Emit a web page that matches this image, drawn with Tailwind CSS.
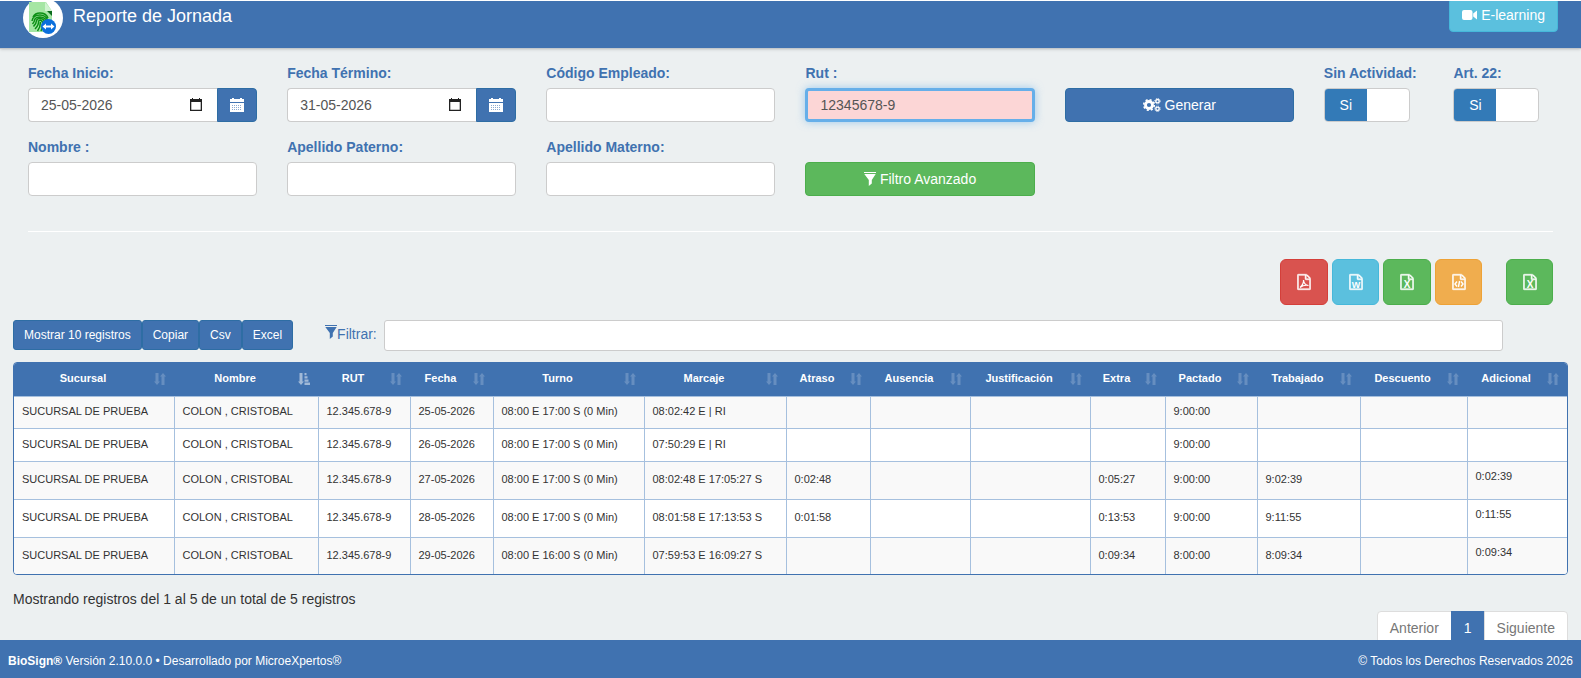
<!DOCTYPE html>
<html lang="es">
<head>
    <meta charset="UTF-8">
    <meta name="viewport" content="width=device-width, initial-scale=1.0">
    <title>Reporte de Jornada</title>
    <script src="https://cdn.jsdelivr.net/npm/@tailwindcss/browser@4"></script>
</head>
<body class="min-h-screen bg-[#ecf0f1] font-['Liberation_Sans',Arial,sans-serif] text-sm text-[#333]">

    <!-- Shared icons -->
    <svg class="hidden">
        <symbol id="i-calendar" viewBox="0 0 14 14">
            <path fill="currentColor" d="M0 1h2V0h2v1h6V0h2v1h2v3H0z"/>
            <path fill="currentColor" d="M0 5h14v9H0z"/>
            <path stroke="#4072b0" stroke-opacity=".6" stroke-dasharray="1 1" d="M2 7.500h10M2 9.500h10M2 11.500h10"/>
        </symbol>
        <symbol id="i-picker" viewBox="0 0 12 13">
            <path fill="#222" fill-rule="evenodd" d="M0 1h2V0h1v1h6V0h1v1h2v12H0zM1.300 4v7.700h9.400V4z"/>
        </symbol>
        <symbol id="i-filter" viewBox="0 0 12 14">
            <path fill="currentColor" d="M0 0h12v1H0zM0.300 2h11.400L7.800 8v3.500L4.800 14V8z"/>
        </symbol>
        <symbol id="i-file" viewBox="-40 0 1616 1792">
            <path fill="currentColor" stroke="currentColor" stroke-width="60" d="M1468 380q28 28 48 76t20 88v1152q0 40-28 68t-68 28H96q-40 0-68-28t-28-68V96q0-40 28-68T96 0h896q40 0 88 20t76 48zm-444-244v376h376q-10-29-22-41l-313-313q-12-12-41-22zm384 1528V640H992q-40 0-68-28t-28-68V128H128v1536h1280z"/>
        </symbol>
        <symbol id="i-sort" viewBox="0 0 12 12">
            <path fill="currentColor" d="M1.500 0h3v8.500H6l-3 3.500-3-3.500h1.500zM7.500 12h3V3.500H12L9 0 6 3.500h1.500z"/>
        </symbol>
        <symbol id="i-sort-asc" viewBox="0 0 12 12">
            <path fill="currentColor" d="M1.500 0h3v8.500H6l-3 3.500-3-3.500h1.500zM6.500 0h2v2.300h-2zM6.500 3.200h3v2.300h-3zM6.500 6.400h4v2.300h-4zM6.500 9.600H12V12H6.500z"/>
        </symbol>
    </svg>

    <header class="flex h-[49px] items-start overflow-hidden border-t border-b border-t-white border-b-[#c4c8cc] bg-[#4072b0] pr-[23px] pl-[23px] shadow-sm">
        <svg class="-mt-[3px] size-10 shrink-0" viewBox="0 0 40 40">
            <circle cx="20" cy="20" r="20" fill="#fff"/>
            <path fill="#a5e6a4" d="M6 4h17l6 9v21H6z"/>
            <path fill="#cff3cf" d="M22 4l7 9h-7z"/>
            <path fill="#0b6b1c" d="M24 13h5v5z"/>
            <g fill="none" stroke="#0b8f14" stroke-width="1.500">
                <path d="M10 19q2-4 7-4 6 0 8 5M9 23q1-6 8-6 6 0 8 6M9.500 26q2-2 2-4 1-3 5.500-3 6 0 7 6v3M10.500 28.500q3-3 3-6 .500-2 3.500-2 5 0 5 6 0 3-1 5M12 31q4-4 3.500-8 3-2 4.500 2 0 4-2 8M14.500 33q3-4 3-9"/>
            </g>
            <circle cx="25.500" cy="28.500" r="7.500" fill="#0b6fdc"/>
            <path fill="#fff" d="M19.500 28.500l3.500-3v2h5v-2l3.500 3-3.500 3v-2h-5v2z"/>
        </svg>
        <h1 class="mt-[4px] ml-[10px] text-lg leading-[22px] text-white">Reporte de Jornada</h1>
        <button type="button" class="-mt-[3px] ml-auto flex h-[34px] items-center gap-1 rounded border border-[#46b8da] bg-[#5bc0de] px-3 text-white">
            <svg class="h-[14px] w-[15px]" viewBox="0 0 15 14"><path fill="currentColor" d="M2 2h6.500q2 0 2 2v6q0 2-2 2H2q-2 0-2-2V4q0-2 2-2zM15 2.500v9L11.200 8.500v-3z"/></svg>
            E-learning
        </button>
    </header>

    <main class="px-[13px] pt-[14px] pb-[33px]">
        <form onsubmit="return false">
            <div class="grid grid-cols-12 gap-y-[15px]">
                <div class="col-span-2 px-[15px]">
                    <label for="fecha_inicio" class="mb-[5px] block font-bold text-[#4072b0]">Fecha Inicio:</label>
                    <div class="flex">
                        <div class="relative min-w-0 flex-1">
                            <input id="fecha_inicio" type="text" value="25-05-2026" class="h-[34px] w-full rounded-l border border-r-0 border-[#ccc] bg-white px-3 text-[#555]">
                            <svg class="absolute top-[10px] right-[15px] h-[13px] w-3"><use href="#i-picker"/></svg>
                        </div>
                        <button type="button" aria-label="Calendario inicio" class="flex h-[34px] w-10 items-center justify-center rounded-r border border-[#2e6da4] bg-[#4072b0] text-white"><svg class="size-[14px]"><use href="#i-calendar"/></svg></button>
                    </div>
                </div>
                <div class="col-span-2 px-[15px]">
                    <label for="fecha_termino" class="mb-[5px] block font-bold text-[#4072b0]">Fecha Término:</label>
                    <div class="flex">
                        <div class="relative min-w-0 flex-1">
                            <input id="fecha_termino" type="text" value="31-05-2026" class="h-[34px] w-full rounded-l border border-r-0 border-[#ccc] bg-white px-3 text-[#555]">
                            <svg class="absolute top-[10px] right-[15px] h-[13px] w-3"><use href="#i-picker"/></svg>
                        </div>
                        <button type="button" aria-label="Calendario término" class="flex h-[34px] w-10 items-center justify-center rounded-r border border-[#2e6da4] bg-[#4072b0] text-white"><svg class="size-[14px]"><use href="#i-calendar"/></svg></button>
                    </div>
                </div>
                <div class="col-span-2 px-[15px]">
                    <label for="codigo" class="mb-[5px] block font-bold text-[#4072b0]">Código Empleado:</label>
                    <input id="codigo" type="text" class="h-[34px] w-full rounded border border-[#ccc] bg-white px-3 text-[#555]">
                </div>
                <div class="col-span-2 px-[15px]">
                    <label for="rut" class="mb-[5px] block font-bold text-[#4072b0]">Rut :</label>
                    <input id="rut" type="text" value="12345678-9" class="h-[34px] w-full rounded border-3 border-[#66afe9] bg-[#fcd6d6] px-3 text-[#555] shadow-[0_0_8px_#66afe999] outline-none">
                </div>
                <div class="col-span-2 flex items-end px-[15px]">
                    <button type="submit" class="flex h-[34px] w-full items-center justify-center gap-1 rounded border border-[#2e6da4] bg-[#4072b0] text-white">
                        <svg class="h-[14px] w-[18px]" viewBox="0 0 18 14" fill="none" stroke="currentColor">
                            <circle cx="6" cy="7" r="3.500" stroke-width="2.800"/>
                            <circle cx="6" cy="7" r="5.300" stroke-width="1.600" stroke-dasharray="2.080"/>
                            <circle cx="14.500" cy="3.200" r="1.700" stroke-width="1.400"/>
                            <circle cx="14.500" cy="3.200" r="2.700" stroke-width="1" stroke-dasharray="1.060"/>
                            <circle cx="14.500" cy="10.800" r="1.700" stroke-width="1.400"/>
                            <circle cx="14.500" cy="10.800" r="2.700" stroke-width="1" stroke-dasharray="1.060"/>
                        </svg>
                        Generar
                    </button>
                </div>
                <div class="col-span-1 pl-[15px]">
                    <label for="sin_actividad" class="mb-[5px] block font-bold whitespace-nowrap text-[#4072b0]">Sin Actividad:</label>
                    <label class="flex h-[34px] w-[86px] overflow-hidden rounded border border-[#ccc] bg-white">
                        <input id="sin_actividad" type="checkbox" checked class="sr-only">
                        <span class="flex w-1/2 items-center justify-center bg-[#337ab7] text-white">Si</span>
                    </label>
                </div>
                <div class="col-span-1 pl-[15px]">
                    <label for="art22" class="mb-[5px] block font-bold whitespace-nowrap text-[#4072b0]">Art. 22:</label>
                    <label class="flex h-[34px] w-[86px] overflow-hidden rounded border border-[#ccc] bg-white">
                        <input id="art22" type="checkbox" checked class="sr-only">
                        <span class="flex w-1/2 items-center justify-center bg-[#337ab7] text-white">Si</span>
                    </label>
                </div>

                <div class="col-span-2 px-[15px]">
                    <label for="nombre" class="mb-[5px] block font-bold text-[#4072b0]">Nombre :</label>
                    <input id="nombre" type="text" class="h-[34px] w-full rounded border border-[#ccc] bg-white px-3 text-[#555]">
                </div>
                <div class="col-span-2 px-[15px]">
                    <label for="paterno" class="mb-[5px] block font-bold text-[#4072b0]">Apellido Paterno:</label>
                    <input id="paterno" type="text" class="h-[34px] w-full rounded border border-[#ccc] bg-white px-3 text-[#555]">
                </div>
                <div class="col-span-2 px-[15px]">
                    <label for="materno" class="mb-[5px] block font-bold text-[#4072b0]">Apellido Materno:</label>
                    <input id="materno" type="text" class="h-[34px] w-full rounded border border-[#ccc] bg-white px-3 text-[#555]">
                </div>
                <div class="col-span-2 flex items-end px-[15px]">
                    <button type="button" class="flex h-[34px] w-full items-center justify-center gap-1 rounded border border-[#4cae4c] bg-[#5cb85c] text-white">
                        <svg class="h-[14px] w-3"><use href="#i-filter"/></svg>
                        Filtro Avanzado
                    </button>
                </div>
            </div>
        </form>

        <hr class="mx-[15px] mt-[35px] border-white">

        <!-- Export buttons -->
        <div class="mt-[27px] mr-[15px] flex justify-end gap-1 text-white">
            <button type="button" aria-label="PDF" class="flex h-[46px] w-12 items-center justify-center rounded-md border border-[#d43f3a] bg-[#d9534f]">
                <svg class="h-[18px] w-[14px]" viewBox="0 0 14 18"><use href="#i-file" width="14" height="18"/><path fill="none" stroke="currentColor" stroke-width="1.200" d="M3 14.500Q7 11 6.500 7q.500 5 5 5.500Q7 11.500 3 14.500"/></svg>
            </button>
            <button type="button" aria-label="Word" class="flex h-[46px] w-[47px] items-center justify-center rounded-md border border-[#46b8da] bg-[#5bc0de]">
                <svg class="h-[18px] w-[14px]" viewBox="0 0 14 18"><use href="#i-file" width="14" height="18"/><text x="7" y="14.500" text-anchor="middle" font-size="9" font-weight="bold" fill="currentColor">W</text></svg>
            </button>
            <button type="button" aria-label="Excel" class="flex h-[46px] w-12 items-center justify-center rounded-md border border-[#4cae4c] bg-[#5cb85c]">
                <svg class="h-[18px] w-[14px]" viewBox="0 0 14 18"><use href="#i-file" width="14" height="18"/><text x="7" y="15" text-anchor="middle" font-size="10" font-weight="bold" fill="currentColor">X</text></svg>
            </button>
            <button type="button" aria-label="XML" class="flex h-[46px] w-[47px] items-center justify-center rounded-md border border-[#eea236] bg-[#f0ad4e]">
                <svg class="h-[18px] w-[14px]" viewBox="0 0 14 18"><use href="#i-file" width="14" height="18"/><path fill="none" stroke="currentColor" stroke-width="1.400" d="M5 8.500L3 11l2 2.500M9 8.500l2 2.500-2 2.500M7.600 8l-1.200 6"/></svg>
            </button>
            <button type="button" aria-label="Excel resumen" class="ml-5 flex h-[46px] w-[47px] items-center justify-center rounded-md border border-[#4cae4c] bg-[#5cb85c]">
                <svg class="h-[18px] w-[14px]" viewBox="0 0 14 18"><use href="#i-file" width="14" height="18"/><text x="7" y="15" text-anchor="middle" font-size="10" font-weight="bold" fill="currentColor">X</text></svg>
            </button>
        </div>

        <div class="mt-[15px] mr-[65px] flex items-start">
            <div class="flex text-xs text-white">
                <button type="button" class="h-[30px] rounded-[3px] border border-[#2e6da4] bg-[#4072b0] px-[10px]">Mostrar 10 registros</button>
                <button type="button" class="h-[30px] rounded-[3px] border border-[#2e6da4] bg-[#4072b0] px-[10px]">Copiar</button>
                <button type="button" class="h-[30px] rounded-[3px] border border-[#2e6da4] bg-[#4072b0] px-[10px]">Csv</button>
                <button type="button" class="h-[30px] rounded-[3px] border border-[#2e6da4] bg-[#4072b0] px-[10px]">Excel</button>
            </div>
            <label for="filtrar" class="mt-1 ml-8 flex text-[#4072b0]"><svg class="mt-px h-[14px] w-3"><use href="#i-filter"/></svg>Filtrar:</label>
            <input id="filtrar" type="text" class="ml-[7px] h-[31px] min-w-0 flex-1 rounded-[3px] border border-[#ccc] bg-white px-[10px] text-xs text-[#555]">
        </div>

        <div class="mt-[11px] overflow-hidden rounded border border-[#4072b0] bg-white">
            <table class="w-full table-fixed text-[11px] leading-4">
                <colgroup>
                    <col class="w-[160px]"><col class="w-[144px]"><col class="w-[92px]"><col class="w-[83px]"><col class="w-[151px]"><col class="w-[142px]"><col class="w-[84px]"><col class="w-[100px]"><col class="w-[120px]"><col class="w-[75px]"><col class="w-[92px]"><col class="w-[103px]"><col class="w-[107px]"><col class="w-[100px]">
                </colgroup>
                <thead class="bg-[#4072b0] text-white">
                    <tr id="cabecera"></tr>
                </thead>
                <tbody id="jornadas"></tbody>
            </table>
        </div>

        <p class="mt-[14px]">Mostrando registros del 1 al 5 de un total de 5 registros</p>
        <nav class="mt-[2px] flex justify-end text-[#777]">
            <a href="#" class="rounded-l border border-[#ddd] bg-white px-3 py-[6px]">Anterior</a>
            <a href="#" class="-ml-px border border-[#4072b0] bg-[#4072b0] px-3 py-[6px] text-white">1</a>
            <a href="#" class="-ml-px rounded-r border border-[#ddd] bg-white px-3 py-[6px]">Siguiente</a>
        </nav>
    </main>

    <footer class="fixed inset-x-0 bottom-0 flex h-[38px] items-center justify-between bg-[#4072b0] px-2 pt-1 text-xs text-white">
        <span><b>BioSign®</b> Versión 2.10.0.0 • Desarrollado por MicroeXpertos®</span>
        <span>© Todos los Derechos Reservados 2026</span>
    </footer>

    <script>
        const columnas = ["Sucursal", "Nombre", "RUT", "Fecha", "Turno", "Marcaje", "Atraso", "Ausencia", "Justificación", "Extra", "Pactado", "Trabajado", "Descuento", "Adicional"];

        // fecha, turno, marcaje, atraso, ausencia, justificación, extra, pactado, trabajado, descuento, adicional
        const jornadas = [
            ["25-05-2026", "08:00 E 17:00 S (0 Min)", "08:02:42 E | RI", "", "", "", "", "9:00:00", "", "", ""],
            ["26-05-2026", "08:00 E 17:00 S (0 Min)", "07:50:29 E | RI", "", "", "", "", "9:00:00", "", "", ""],
            ["27-05-2026", "08:00 E 17:00 S (0 Min)", "08:02:48 E 17:05:27 S", "0:02:48", "", "", "0:05:27", "9:00:00", "9:02:39", "", "0:02:39"],
            ["28-05-2026", "08:00 E 17:00 S (0 Min)", "08:01:58 E 17:13:53 S", "0:01:58", "", "", "0:13:53", "9:00:00", "9:11:55", "", "0:11:55"],
            ["29-05-2026", "08:00 E 16:00 S (0 Min)", "07:59:53 E 16:09:27 S", "", "", "", "0:09:34", "8:00:00", "8:09:34", "", "0:09:34"]
        ];

        document.getElementById("cabecera").innerHTML = columnas.map((c) => `
            <th class="relative h-[33px] pr-[30px] pb-[2px] pl-2 text-center font-bold">${c}
                <svg class="absolute top-[10px] right-2 size-3 ${c === "Nombre" ? "opacity-50" : "opacity-20"}"><use href="${c === "Nombre" ? "#i-sort-asc" : "#i-sort"}"/></svg>
            </th>`).join("");

        document.getElementById("jornadas").innerHTML = jornadas.map((j) => {
            const celdas = ["SUCURSAL DE PRUEBA", "COLON , CRISTOBAL", "12.345.678-9", ...j];
            const alto = j[10] ? "h-[38px] last:h-[37px]" : "h-[33px] first:h-[32px]";
            return `<tr class="odd:bg-[#f9f9f9] ${alto}">` + celdas.map((t, i) =>
                `<td class="border-t border-r border-[#a6c0de] px-2 whitespace-nowrap last:border-r-0 ${i === 13 ? "pb-[8px]" : "pb-[2px]"}">${t}</td>`
            ).join("") + "</tr>";
        }).join("");
    </script>
</body>
</html>
